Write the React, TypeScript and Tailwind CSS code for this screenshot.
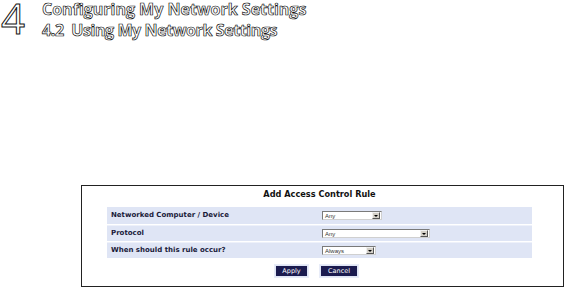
import React from "react";

const outline = "text-white [-webkit-text-stroke:0.7px_#111]";

const rows = [
  { label: "Networked Computer / Device", value: "Any", width: "w-[60px]" },
  { label: "Protocol", value: "Any", width: "w-[108px]" },
  { label: "When should this rule occur?", value: "Always", width: "w-[54px]" },
];

function Select({ value, width }: { value: string; width: string }) {
  return (
    <div className={`flex h-[9px] ${width} items-center border border-[#7a7a7a] border-r-[#d0d0d0] border-b-[#d0d0d0] bg-white`}>
      <span className="flex-1 pl-[2px] text-[6px] leading-none text-[#333] font-['Liberation_Sans',sans-serif]">{value}</span>
      <span className="flex h-[7px] w-[8px] items-center justify-center bg-[#d4d0c8] border border-[#f0f0f0] border-r-[#555] border-b-[#555] mr-[1px]">
        <span className="block h-0 w-0 border-x-[2px] border-t-[2px] border-x-transparent border-t-black" />
      </span>
    </div>
  );
}

export default function App() {
  return (
    <div className="relative h-[288px] w-[565px] overflow-hidden bg-white">
      {/* chapter header */}
      <div className="flex items-start pl-[1px] pt-[1px] font-['Open_Sans',sans-serif]">
        <div className="mt-[-12px] text-[42px] leading-[58px] font-normal text-white [-webkit-text-stroke:1px_#111]">4</div>
        <div className="ml-[17px] flex flex-col">
          <div className={`${outline} mt-[-3px] text-[16px] leading-[22px] font-bold`}>Configuring My Network Settings</div>
          <div className={`${outline} mt-[-1px] text-[16px] leading-[22px] font-bold tracking-[-0.4px]`}>4.2&nbsp; Using My Network Settings</div>
        </div>
      </div>

      {/* dialog frame */}
      <div className="absolute left-[81px] top-[185px] flex h-[102px] w-[483px] flex-col border border-[#222] font-['DejaVu_Sans',sans-serif]">
        <div className="mt-[3px] pr-[6px] text-center text-[8.2px] font-bold leading-[11px] text-[#111]">Add Access Control Rule</div>
        <div className="ml-[25px] mt-[7px] flex w-[425px] flex-col gap-[1px] bg-white">
          {rows.map((r, i) => (
            <div
              key={r.label}
              className={`flex items-center bg-[#dfe5f5] ${i === 0 ? "h-[17px]" : "h-[16px]"} ${i > 0 ? "border-t border-[#eef1fa]" : ""}`}
            >
              <span className="w-[215px] pl-[4px] text-[7px] font-bold leading-none text-[#1a1a3a]">{r.label}</span>
              <Select value={r.value} width={r.width} />
            </div>
          ))}
        </div>
        <div className="ml-[193px] mt-[7px] flex gap-[12px]">
          <button className="flex h-[12px] w-[33px] items-center justify-center border border-[#dfe5f5] bg-[#1b1b4f] text-[6.5px] leading-none text-white outline outline-1 outline-[#e8ecf8]">Apply</button>
          <button className="flex h-[12px] w-[38px] items-center justify-center border border-[#dfe5f5] bg-[#1b1b4f] text-[6.5px] leading-none text-white outline outline-1 outline-[#e8ecf8]">Cancel</button>
        </div>
      </div>
    </div>
  );
}
